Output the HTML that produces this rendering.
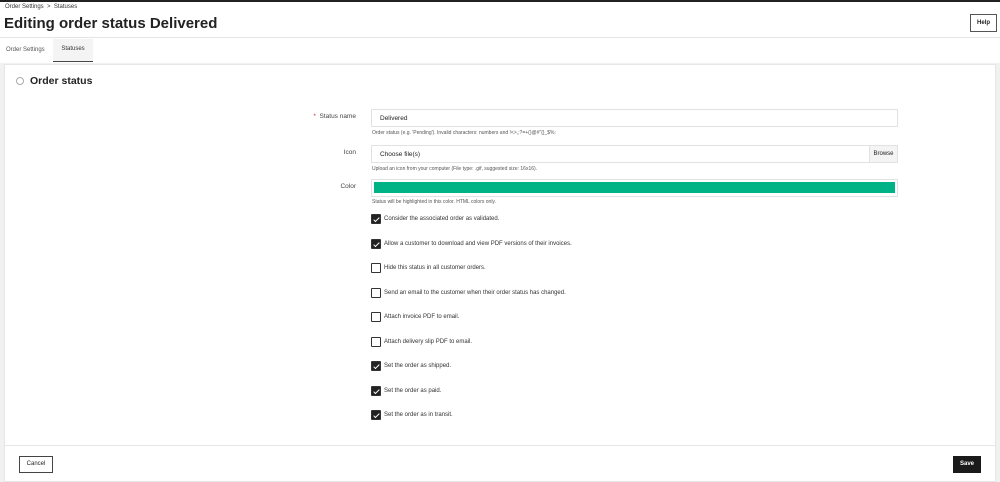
<!DOCTYPE html><html><head><style>
*{box-sizing:border-box;margin:0;padding:0}
body{width:1000px;height:482px;overflow:hidden;background:#f1f1f1;font-family:"Liberation Sans",sans-serif;color:#222;position:relative}
.a{position:absolute}
.hdr{left:0;top:0;width:1000px;height:38px;background:#fff;border-top:2px solid #222;border-bottom:1px solid #e4e4e4}
.tabs{left:0;top:38px;width:1000px;height:25px;background:#fff}
.card{left:4px;top:64px;width:992px;height:418px;background:#fff;border:1px solid #e6e6e6}
.lbl{font-size:6.5px;color:#444;text-align:right;width:100px;left:256px}
.inp{left:371px;width:527px;height:18px;border:1px solid #e2e2e2;background:#fff;font-size:6.5px;padding:5px 8px}
.help{left:372px;font-size:5px;color:#555}
.cb{left:371px;width:10px;height:10px;border:1px solid #333;border-radius:1px;background:#fff}
.cb.on{background:#222}
.cb.on:after{content:"";position:absolute;left:3px;top:1px;width:2px;height:5px;border:solid #fff;border-width:0 1.3px 1.3px 0;transform:rotate(45deg)}
.ct{left:384px;font-size:6px;color:#333}
</style></head><body>
<div class="a hdr"></div>
<div class="a" style="left:5px;top:4px;font-size:6px;color:#333">Order Settings &nbsp;&gt;&nbsp; Statuses</div>
<div class="a" style="left:4px;top:15px;font-size:15px;font-weight:bold;color:#222">Editing order status Delivered</div>
<div class="a" style="left:970px;top:14px;width:27px;height:18px;border:1px solid #555;font-size:6px;font-weight:bold;text-align:center;line-height:16px">Help</div>
<div class="a tabs"></div>
<div class="a" style="left:6px;top:47px;font-size:6px;color:#555">Order Settings</div>
<div class="a" style="left:53px;top:39px;width:40px;height:23px;background:#f4f4f4;border-bottom:1.5px solid #444;font-size:6px;color:#333;text-align:center;line-height:21px">Statuses</div>
<div class="a card"></div>
<div class="a" style="left:16px;top:77px;width:8px;height:8px;border:1px solid #aaa;border-radius:50%"></div>
<div class="a" style="left:30px;top:75px;font-size:10.5px;font-weight:bold;color:#222">Order status</div>
<div class="a lbl" style="top:113px"><span style="color:#c33">*</span>&nbsp; Status name</div>
<div class="a inp" style="top:109px">Delivered</div>
<div class="a help" style="top:130px">Order status (e.g. 'Pending'). Invalid characters: numbers and !&lt;&gt;,;?=+()@#"{}_$%:</div>
<div class="a lbl" style="top:149px">Icon</div>
<div class="a inp" style="top:145px">Choose file(s)</div>
<div class="a" style="left:869px;top:145px;width:29px;height:18px;background:#f4f4f4;border:1px solid #e2e2e2;font-size:6px;text-align:center;line-height:16px">Browse</div>
<div class="a help" style="top:166px">Upload an icon from your computer (File type: .gif, suggested size: 16x16).</div>
<div class="a lbl" style="top:183px">Color</div>
<div class="a inp" style="top:179px;padding:2px"><div style="background:#00b386;height:11px"></div></div>
<div class="a help" style="top:199px">Status will be highlighted in this color. HTML colors only.</div>
<div class="a cb on" style="top:214px"></div><div class="a ct" style="top:216px">Consider the associated order as validated.</div>
<div class="a cb on" style="top:239px"></div><div class="a ct" style="top:241px">Allow a customer to download and view PDF versions of their invoices.</div>
<div class="a cb" style="top:263px"></div><div class="a ct" style="top:265px">Hide this status in all customer orders.</div>
<div class="a cb" style="top:288px"></div><div class="a ct" style="top:290px">Send an email to the customer when their order status has changed.</div>
<div class="a cb" style="top:312px"></div><div class="a ct" style="top:314px">Attach invoice PDF to email.</div>
<div class="a cb" style="top:337px"></div><div class="a ct" style="top:339px">Attach delivery slip PDF to email.</div>
<div class="a cb on" style="top:361px"></div><div class="a ct" style="top:363px">Set the order as shipped.</div>
<div class="a cb on" style="top:386px"></div><div class="a ct" style="top:388px">Set the order as paid.</div>
<div class="a cb on" style="top:410px"></div><div class="a ct" style="top:412px">Set the order as in transit.</div>
<div class="a" style="left:5px;top:445px;width:990px;height:1px;background:#e6e6e6"></div>
<div class="a" style="left:19px;top:456px;width:34px;height:17px;border:1px solid #444;font-size:6px;text-align:center;line-height:15px">Cancel</div>
<div class="a" style="left:953px;top:456px;width:28px;height:17px;background:#1a1a1a;color:#fff;font-size:6px;font-weight:bold;text-align:center;line-height:17px">Save</div>
</body></html>
